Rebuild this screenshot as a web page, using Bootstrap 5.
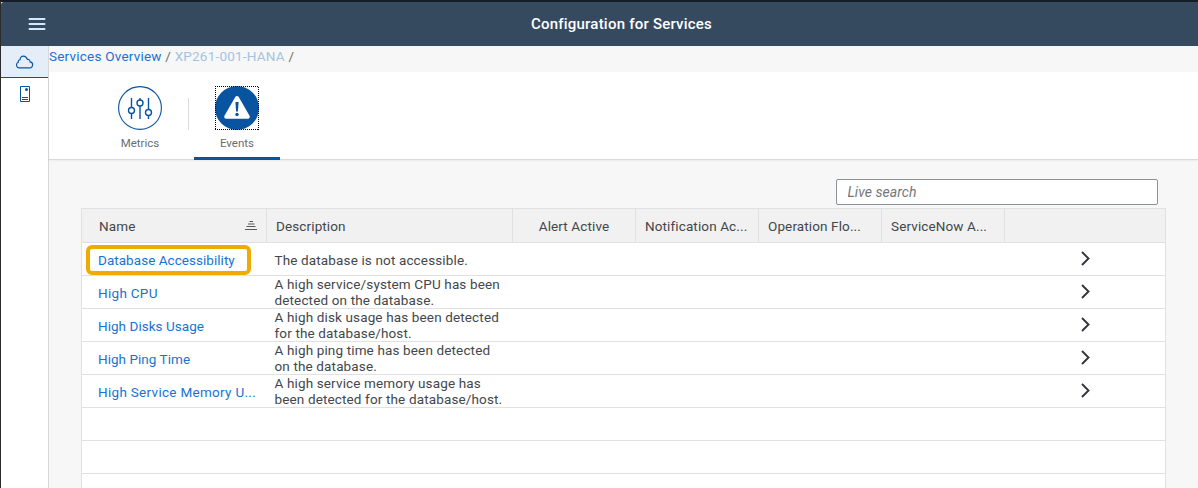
<!DOCTYPE html>
<html lang="en">
<head>
<meta charset="utf-8">
<meta name="viewport" content="width=device-width, initial-scale=1">
<title>Configuration for Services</title>
<link href="https://cdn.jsdelivr.net/npm/bootstrap@5.3.0/dist/css/bootstrap.min.css" rel="stylesheet">
<style>
body{font-family:Roboto,"Liberation Sans",sans-serif;font-size:13.5px;line-height:16px;color:#43474b;background:#f7f7f7;height:488px;overflow:hidden;border-top:2px solid #151d26;border-left:1px solid #2b2b2d}
a{color:#1873d3;text-decoration:none}
.shell-bar{height:44px;background:#354a5f;color:#fff;border-top-left-radius:3px;padding-left:44px}
.menu-btn{left:26px;top:15px;line-height:0}
.shell-title{font-size:15px;font-weight:500;letter-spacing:.22px}
.side-rail{width:48px;height:442px;background:#fff;border-right:1px solid #d5d7d9}
.side-item{height:32px;color:#0854a0}
.side-item.active{background:#e5eef8;border-bottom:1px solid #0854a0}
.crumbs{height:26px;padding-top:2px;color:#6a6d70;letter-spacing:.22px}
.crumbs span{white-space:pre}
.crumbs .crumb-current{color:#a3c3e3}
.icon-tabs{height:88px;background:#fff;border-bottom:1px solid #d9d9d9;padding:14px 0 0 48px;box-shadow:0 1px 2px rgba(0,0,0,.05)}
.icon-tab{width:86px;height:74px;font-size:11.5px;line-height:14px;color:#6a6d70;border-bottom:3px solid transparent}
.icon-tab.active{border-bottom-color:#0854a0;border-radius:2px 2px 0 0}
.tab-circle{width:44px;height:44px;line-height:0}
.tab-label{margin-top:6px}
.tab-split{width:1px;height:32px;margin:12px 5px 0 5px;background:#d9d9d9}
.search-row{padding:19px 40px 0 0}
.search-box{width:322px;height:26px;border:1px solid #89919a;border-radius:2px;font-size:14px;line-height:16px;font-style:italic;padding:4px 10.5px;box-shadow:none;letter-spacing:.05px}
.search-box::placeholder{color:#74777a;opacity:1}
.events{width:1085px;table-layout:fixed;border-collapse:separate;border-spacing:0;border-left:1px solid #e1e1e1;border-top:1px solid #e1e1e1;background:#fff;margin:3px 0 0 32px}
.events th{height:34px;background:#f1f1f1;font-weight:400;border:solid #e1e1e1;border-width:0 1px 1px 0;padding:0 9px;white-space:nowrap;letter-spacing:.12px}
.events th:first-child{padding-left:17px}
.events td{height:33px;border-bottom:1px solid #e1e1e1;padding:0 8px 0 7.5px;vertical-align:middle;white-space:nowrap;letter-spacing:.14px}
.events td:first-child{padding:2px 0 0 16px;letter-spacing:.04px}
.events td:first-child .wide{letter-spacing:.3px}
.events td:last-child{border-right:1px solid #e1e1e1;padding:0 0 0 1px;line-height:0}
.events td.one-line{padding-top:2px}
.nav-arrow{position:relative;top:-1px}
.hl{left:4px;top:2px;width:165px;height:30px;border:4px solid #f0ab00;border-radius:6px;pointer-events:none}
</style>
<script src="https://cdn.jsdelivr.net/npm/bootstrap@5.3.0/dist/js/bootstrap.bundle.min.js"></script>
</head>
<body>
<svg class="d-none"><symbol id="arrow" viewBox="0 0 10 15"><path d="M1 1L7.500 7.500L1 14" fill="none" stroke="#32363a" stroke-width="1.900"/></symbol></svg>
<header class="shell-bar position-relative d-flex align-items-center justify-content-center">
  <span class="menu-btn position-absolute"><svg width="19" height="14" viewBox="0 0 19 14" stroke="#d1e8ff" stroke-width="2" stroke-linecap="round"><path d="M2.500 2H17.500M2.500 7H17.500M2.500 12H17.500"/></svg></span>
  <span class="shell-title">Configuration for Services</span>
</header>
<div class="d-flex">
  <nav class="side-rail flex-shrink-0">
    <div class="side-item active d-flex align-items-center justify-content-center"><svg width="18" height="14" viewBox="0 0 18 14" fill="none" stroke="#0854a0" stroke-width="1.1"><path d="M4.200 12.900H13.800A3 3 0 0 0 14.600 6.900C14.800 5.300 13.500 4.100 11.900 4.400C11.200 2.200 9.900 1.100 8.100 1.100C6 1.100 4.600 2.600 4.700 4.700C3.300 4.600 2.500 5.900 3 7.300A2.900 2.900 0 0 0 4.200 12.900Z" transform="translate(-.6 0)"/></svg></div>
    <div class="side-item d-flex align-items-center justify-content-center"><svg width="12" height="16" viewBox="0 0 12 16" fill="none" stroke="#0854a0"><path d="M1.500.5H10.500V15.500H1.500ZM3 11.500H9M3 13.500H9"/><circle cx="7.500" cy="3.500" r="1.500" fill="#0854a0" stroke="none"/></svg></div>
  </nav>
  <main class="flex-grow-1">
    <div class="crumbs d-flex"><a href="#">Services Overview</a><span> / </span><span class="crumb-current">XP261-001-HANA</span><span> /</span></div>
    <div class="icon-tabs d-flex align-items-start">
      <div class="icon-tab d-flex flex-column align-items-center"><span class="tab-circle"><svg width="44" height="44" viewBox="0 0 44 44" fill="none" stroke="#0854a0"><circle cx="22" cy="22" r="21.400" fill="#fff" stroke-width="1.100"/><g stroke-width="1.400"><path d="M13.500 12V21.500M13.500 27.500V33M22 12V14M22 20V33M30.500 12V23.500M30.500 29.500V33"/><circle cx="13.500" cy="24.500" r="3"/><circle cx="22" cy="17" r="3"/><circle cx="30.500" cy="26.500" r="3"/></g></svg></span><span class="tab-label">Metrics</span></div>
      <div class="tab-split"></div>
      <div class="icon-tab active d-flex flex-column align-items-center"><span class="tab-circle"><svg width="44" height="44" viewBox="0 0 44 44"><circle cx="22" cy="22" r="22" fill="#0854a0"/><path d="M22 12L32.800 30.800H11.200Z" fill="#fff" stroke="#fff" stroke-width="4" stroke-linejoin="round"/><path d="M20.400 16H23.600L22.900 25.500H21.100Z" fill="#0854a0"/><circle cx="22" cy="28.500" r="1.700" fill="#0854a0"/><path d="M0 .5H44M0 43.500H44M.5 0V44M43.500 1V44" stroke="#000" stroke-dasharray="1 1"/></svg></span><span class="tab-label">Events</span></div>
    </div>
    <div class="search-row d-flex justify-content-end"><input class="form-control search-box" placeholder="Live search"></div>
    <table class="events">
      <colgroup><col style="width:185px"><col style="width:246px"><col style="width:123px"><col style="width:123px"><col style="width:123px"><col style="width:123px"><col></colgroup>
      <thead><tr>
        <th><div class="d-flex align-items-center justify-content-between">Name<svg width="12" height="9" viewBox="0 0 12 9" stroke="#43474b"><path d="M4.500.5H8M3 3H9.500M1.500 5.500H10.500M0 8.500H12" stroke-width=".9"/></svg></div></th>
        <th>Description</th><th class="text-center">Alert Active</th><th>Notification Ac...</th><th>Operation Flo...</th><th>ServiceNow A...</th><th></th>
      </tr></thead>
      <tbody>
        <tr><td class="position-relative"><a href="#">Database Accessibility</a><span class="hl position-absolute"></span></td><td class="one-line">The database is not accessible.</td><td></td><td></td><td></td><td></td><td class="text-center"><svg class="nav-arrow" width="10" height="15"><use href="#arrow"/></svg></td></tr>
        <tr><td><a class="wide" href="#">High CPU</a></td><td>A high service/system CPU has been<br>detected on the database.</td><td></td><td></td><td></td><td></td><td class="text-center"><svg class="nav-arrow" width="10" height="15"><use href="#arrow"/></svg></td></tr>
        <tr><td><a href="#">High Disks Usage</a></td><td>A high disk usage has been detected<br>for the database/host.</td><td></td><td></td><td></td><td></td><td class="text-center"><svg class="nav-arrow" width="10" height="15"><use href="#arrow"/></svg></td></tr>
        <tr><td><a href="#">High Ping Time</a></td><td>A high ping time has been detected<br>on the database.</td><td></td><td></td><td></td><td></td><td class="text-center"><svg class="nav-arrow" width="10" height="15"><use href="#arrow"/></svg></td></tr>
        <tr><td><a class="wide" href="#">High Service Memory U...</a></td><td>A high service memory usage has<br>been detected for the database/host.</td><td></td><td></td><td></td><td></td><td class="text-center"><svg class="nav-arrow" width="10" height="15"><use href="#arrow"/></svg></td></tr>
        <tr><td colspan="7"></td></tr>
        <tr><td colspan="7"></td></tr>
        <tr><td colspan="7"></td></tr>
      </tbody>
    </table>
  </main>
</div>
</body>
</html>
